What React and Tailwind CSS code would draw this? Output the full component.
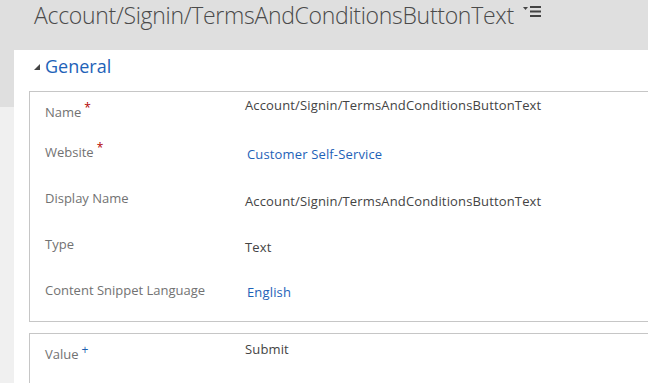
import React from "react";

const font = { fontFamily: '"Open Sans", "Noto Sans", sans-serif' };

function Row({ label, req, value, link, lpt, vpt, h }) {
  return (
    <div className={`flex ${h}`}>
      <div className={`w-[200px] shrink-0 ${lpt} text-[13px] leading-[18px] text-[#727272]`}>
        {label}
        {req === "*" && <span className="relative -top-[5px] ml-[3px] text-[12px] text-[#b20000]">*</span>}
        {req === "+" && <span className="relative -top-[5px] ml-[3px] text-[12px] text-[#1f5fb0]">+</span>}
      </div>
      <div className={`${vpt} text-[13px] leading-[18px] tracking-[0.15px] ${link ? "text-[#1e62b8] pl-[2px]" : "text-[#444444]"}`}>
        {value}
      </div>
    </div>
  );
}

export default function App() {
  return (
    <div className="w-[648px] h-[383px] overflow-hidden bg-[#f0f0f0] flex flex-col" style={font}>
      <div className="h-[50px] shrink-0 bg-[#dfdfdf] flex items-start pl-[34px]">
        <div className="text-[23px] leading-[30px] font-light text-[#4a4a4a] tracking-[-0.3px]">
          Account/Signin/TermsAndConditionsButtonText
        </div>
        <svg width="19" height="12" viewBox="0 0 19 12" className="ml-[9px] mt-[6px]">
          <polygon points="0,1 5,1 2.5,4" fill="#444" />
          <rect x="7" y="0" width="11" height="2" fill="#444" />
          <rect x="7" y="4.5" width="11" height="2" fill="#444" />
          <rect x="7" y="9" width="11" height="2" fill="#444" />
        </svg>
      </div>
      <div className="flex flex-1">
        <div className="w-[14px] shrink-0">
          <div className="h-[57px] bg-[#dfdfdf]" />
        </div>
        <div className="flex-1 bg-white pl-[15px]">
          <div className="h-[41px] flex items-start pt-[3px]">
            <svg width="6" height="6" viewBox="0 0 6 6" className="ml-[5px] mt-[11px]">
              <polygon points="0,6 6,6 6,0" fill="#444" />
            </svg>
            <div className="ml-[5px] text-[18px] leading-[26px] text-[#1e62b8]">General</div>
          </div>
          <div className="border border-r-0 border-[#c6c6c6] h-[231px] pl-[15px]">
            <Row label="Name" req="*" value="Account/Signin/TermsAndConditionsButtonText" lpt="pt-[11px]" vpt="pt-[4px]" h="h-[46px]" />
            <Row label="Website" req="*" value="Customer Self-Service" link lpt="pt-[5px]" vpt="pt-[7px]" h="h-[46px]" />
            <Row label="Display Name" value="Account/Signin/TermsAndConditionsButtonText" lpt="pt-[5px]" vpt="pt-[8px]" h="h-[46px]" />
            <Row label="Type" value="Text" lpt="pt-[5px]" vpt="pt-[8px]" h="h-[46px]" />
            <Row label="Content Snippet Language" value="English" link lpt="pt-[5px]" vpt="pt-[7px]" h="h-[45px]" />
          </div>
          <div className="mt-[11px] border border-r-0 border-b-0 border-[#c6c6c6] h-[60px] pl-[15px]">
            <Row label="Value" req="+" value="Submit" lpt="pt-[11px]" vpt="pt-[6px]" h="h-[46px]" />
          </div>
        </div>
      </div>
    </div>
  );
}
